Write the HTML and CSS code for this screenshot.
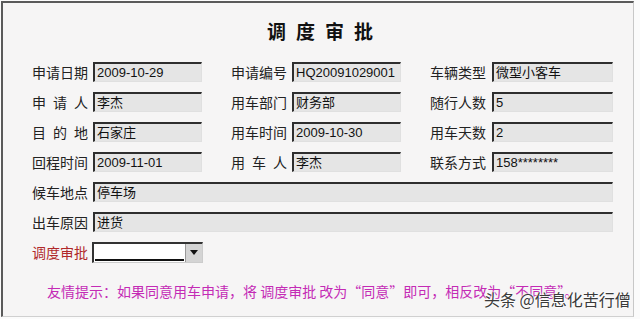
FILE: index.html
```html
<!DOCTYPE html>
<html lang="zh">
<head>
<meta charset="utf-8">
<link rel="stylesheet" href="styles.css">
</head>
<body>
<div class="frame">
  <h1 class="title">调度审批</h1>
  <div class="form">
    <div class="row">
      <div class="grp g1"><span class="lbl">申请日期</span><span class="inp">2009-10-29</span></div>
      <div class="grp g2"><span class="lbl">申请编号</span><span class="inp">HQ20091029001</span></div>
      <div class="grp g3"><span class="lbl">车辆类型</span><span class="inp">微型小客车</span></div>
    </div>
    <div class="row">
      <div class="grp g1"><span class="lbl">申请人</span><span class="inp">李杰</span></div>
      <div class="grp g2"><span class="lbl">用车部门</span><span class="inp">财务部</span></div>
      <div class="grp g3"><span class="lbl">随行人数</span><span class="inp">5</span></div>
    </div>
    <div class="row">
      <div class="grp g1"><span class="lbl">目的地</span><span class="inp">石家庄</span></div>
      <div class="grp g2"><span class="lbl">用车时间</span><span class="inp">2009-10-30</span></div>
      <div class="grp g3"><span class="lbl">用车天数</span><span class="inp">2</span></div>
    </div>
    <div class="row">
      <div class="grp g1"><span class="lbl">回程时间</span><span class="inp">2009-11-01</span></div>
      <div class="grp g2"><span class="lbl">用车人</span><span class="inp">李杰</span></div>
      <div class="grp g3"><span class="lbl">联系方式</span><span class="inp">158********</span></div>
    </div>
    <div class="row">
      <div class="grp wide"><span class="lbl">候车地点</span><span class="inp">停车场</span></div>
    </div>
    <div class="row">
      <div class="grp wide"><span class="lbl">出车原因</span><span class="inp">进货</span></div>
    </div>
    <div class="row">
      <div class="grp g1"><span class="lbl red">调度审批</span><span class="sel"><span class="sel-box"></span><span class="sel-btn"><svg width="8" height="5" viewBox="0 0 8 5"><path d="M0 0H8L4 5Z" fill="#111"/></svg></span></span></div>
    </div>
  </div>
  <p class="hint">友情提示：如果同意用车申请，将 调度审批 改为“同意”即可，相反改为“不同意”。</p>
  <div class="mark">头条 @信息化苦行僧</div>
</div>
</body>
</html>
```
FILE: styles.css
```css
html, body {
  margin: 0;
  padding: 0;
  background: #fbfbfb;
}
body {
  width: 640px;
  height: 319px;
  overflow: hidden;
  font-family: "Liberation Sans", "Noto Sans CJK SC", sans-serif;
}
.frame {
  position: relative;
  margin: 1px 0 0 1px;
  width: 633px;
  height: 316px;
  background: #f6f5f5;
  border-top: 2px solid #5a5a5a;
  border-left: 2px solid #5a5a5a;
  border-right: 1px solid #c8c8c8;
  border-bottom: 1px solid #d0d0d0;
  box-sizing: border-box;
}
.title {
  margin: 0;
  padding-top: 16px;
  height: 29px;
  text-align: center;
  font-size: 19px;
  font-weight: bold;
  letter-spacing: 10px;
  text-indent: 14px;
  line-height: 24px;
  color: #111;
  font-family: "Noto Sans CJK SC", sans-serif;
}
.form {
  padding-top: 14px;
  padding-left: 29px;
  display: flex;
  flex-direction: column;
  gap: 10px;
}
.row {
  display: flex;
  height: 20px;
}
.grp {
  display: flex;
  align-items: center;
}
.lbl {
  width: 56px;
  font-size: 14px;
  color: #222;
  text-align: justify;
  text-align-last: justify;
  font-family: "Noto Sans CJK SC", sans-serif;
  line-height: 20px;
}
.lbl.red {
  color: #b0282a;
}
.inp {
  box-sizing: border-box;
  height: 20px;
  background: #e5e5e5;
  border-top: 2px solid #2e2e2e;
  border-left: 2px solid #2e2e2e;
  border-right: 1px solid #e0e0e0;
  border-bottom: 1px solid #e0e0e0;
  font-size: 13px;
  line-height: 17px;
  padding-left: 2px;
  color: #111;
  font-family: "Liberation Sans", "Noto Sans CJK SC", sans-serif;
  white-space: nowrap;
  overflow: hidden;
}
.g1 .inp { margin-left: 5px; width: 109px; }
.g1 { margin-right: 29px; }
.g2 .inp { margin-left: 5px; width: 109px; }
.g2 { margin-right: 29px; }
.g3 .inp { margin-left: 6px; width: 121px; }
.wide .inp { margin-left: 5px; width: 520px; }
.sel {
  margin-left: 4px;
  width: 111px;
  height: 21px;
  display: flex;
  box-sizing: border-box;
  border-top: 2px solid #333;
  border-left: 2px solid #333;
  border-right: 1px solid #ccc;
  border-bottom: 1px solid #ccc;
  background: #fff;
}
.sel-box {
  flex: 1;
  border-bottom: 2px solid #111;
  margin: 0 1px 1px 1px;
}
.sel-btn {
  width: 16px;
  background: #d4d4d4;
  border-left: 1px solid #999;
  display: flex;
  align-items: center;
  justify-content: center;
}
.hint {
  margin: 0;
  position: absolute;
  left: 44px;
  top: 279px;
  font-size: 14px;
  line-height: 18px;
  color: #c42bb5;
  font-family: "Noto Sans CJK SC", sans-serif;
  white-space: nowrap;
}
.mark {
  position: absolute;
  left: 481px;
  top: 285px;
  font-size: 16px;
  line-height: 22px;
  color: #3a3a3a;
  font-family: "Noto Sans CJK SC", sans-serif;
  text-shadow: 0 0 2px #fff, 0 0 2px #fff, 0 0 3px #fff;
  white-space: nowrap;
}
```
